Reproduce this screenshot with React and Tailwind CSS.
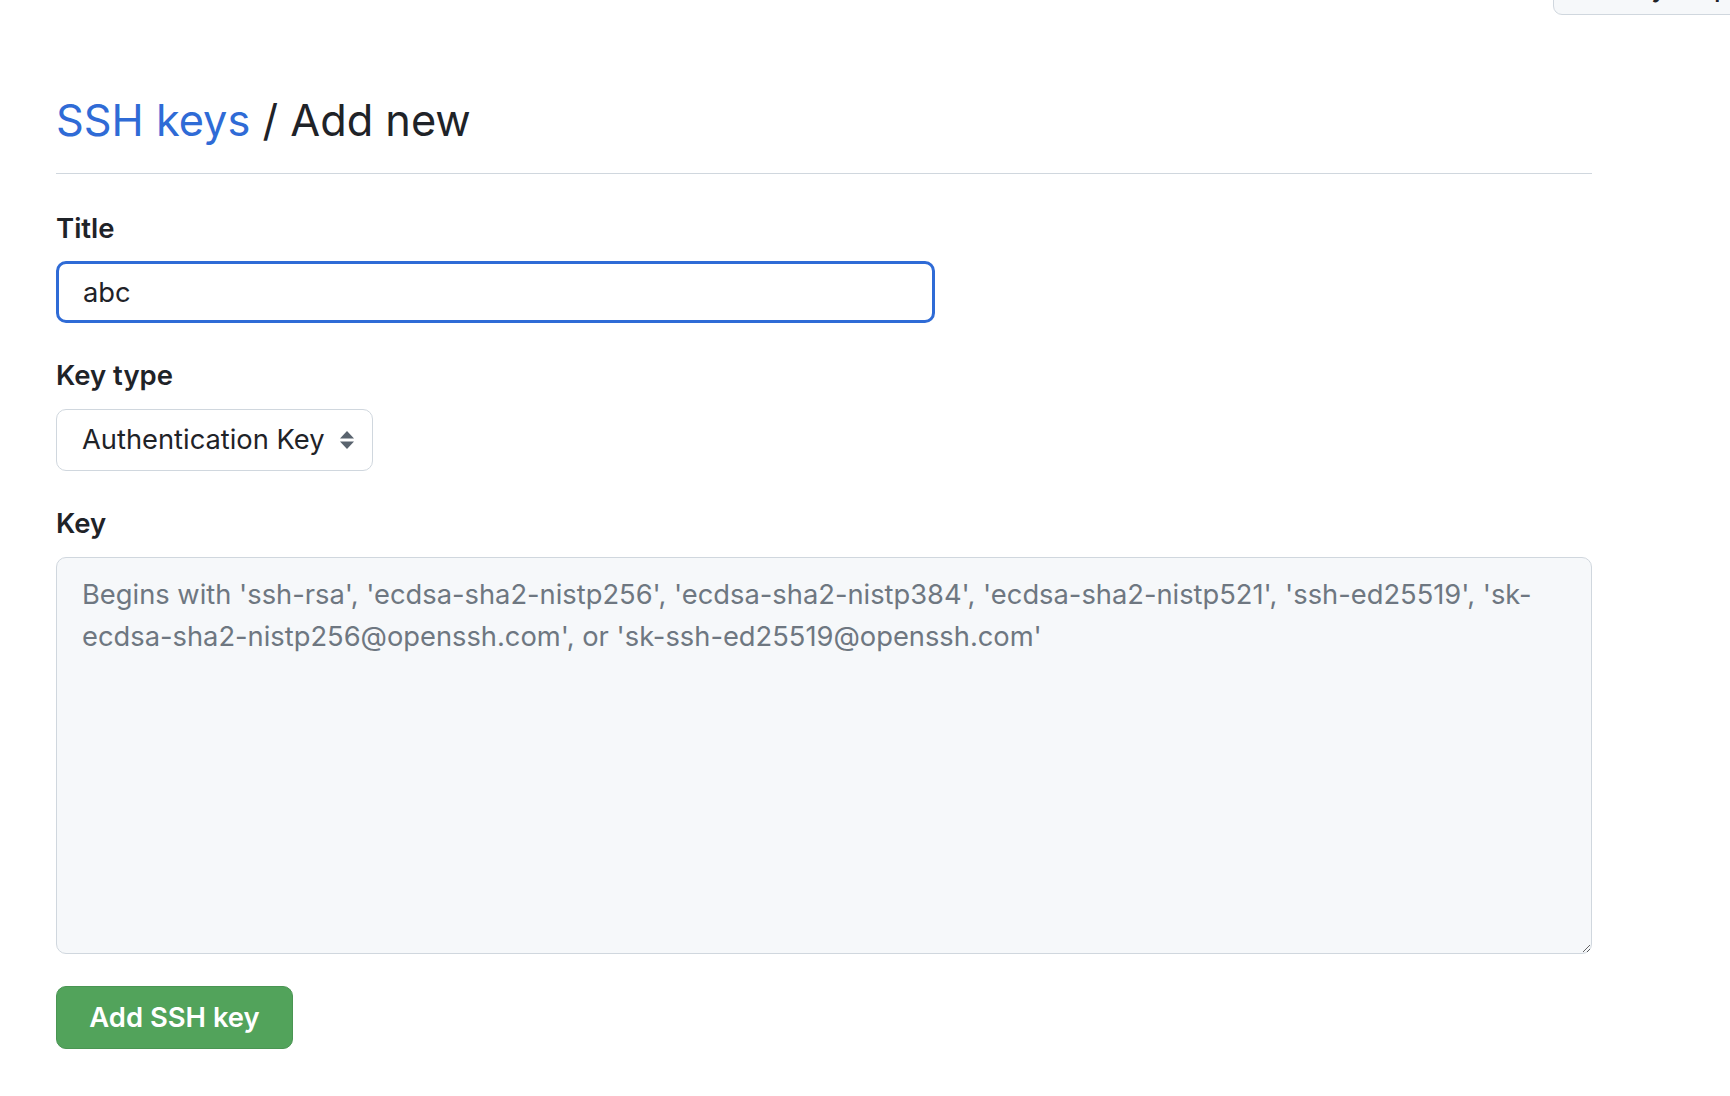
import React from "react";

export default function App() {
  const placeholder =
    "Begins with 'ssh-rsa', 'ecdsa-sha2-nistp256', 'ecdsa-sha2-nistp384', 'ecdsa-sha2-nistp521', 'ssh-ed25519', 'sk-\necdsa-sha2-nistp256@openssh.com', or 'sk-ssh-ed25519@openssh.com'";
  return (
    <div
      className="w-[1730px] h-[1096px] overflow-hidden bg-white text-[#1f2328]"
      style={{ fontFamily: "Inter, 'Liberation Sans', sans-serif" }}
    >
      {/* top-right cropped button */}
      <div className="h-[15px] flex pl-[1553px]">
        <div className="shrink-0 mt-[-41px] h-[56px] flex items-center rounded-[9px] border border-[#d0d7de] bg-[#f6f8fa] px-6 text-[26px] font-medium whitespace-nowrap">
          Go to your profile
        </div>
      </div>

      <div className="pl-[56px] w-[1592px] pt-[78px]">
        <div className="border-b border-[#d0d7de] pb-[26px]">
          <h1 className="text-[43.3px] leading-[54px] font-normal">
            <a className="text-[#2f6bd6]" href="#">SSH keys</a>
            <span> / Add new</span>
          </h1>
        </div>

        <form className="flex flex-col">
          <label className="mt-[36px] text-[27.5px] leading-[36px] font-semibold">Title</label>
          <input
            className="mt-[15px] w-[879px] h-[62px] rounded-[10px] border-[3px] border-[#2f6bd6] bg-white px-[24px] text-[27.3px] text-[#1f2328] outline-none"
            defaultValue="abc"
          />

          <label className="mt-[34px] text-[27.5px] leading-[36px] font-semibold">Key type</label>
          <div className="mt-[16px] w-[317px] h-[62px] rounded-[10px] border border-[#d0d7de] bg-white pl-[25px] pr-[16px] flex items-center justify-between">
            <span className="text-[27.3px]">Authentication Key</span>
            <svg width="16" height="22" viewBox="0 0 16 22" className="mr-[1px]">
              <path d="M8 2 L15 9.5 H1 Z" fill="#59636e" />
              <path d="M8 20 L15 12.5 H1 Z" fill="#59636e" />
            </svg>
          </div>

          <label className="mt-[34px] text-[27.5px] leading-[36px] font-semibold">Key</label>
          <textarea
            className="mt-[16px] w-[1536px] h-[397px] rounded-[10px] border border-[#d0d7de] bg-[#f6f8fa] px-[25px] pt-[16px] text-[27.3px] leading-[42px] text-[#1f2328] placeholder:text-[#6e7781] outline-none"
            placeholder={placeholder}
          />

          <div className="mt-[32px]">
            <button
              type="button"
              className="w-[237px] h-[63px] rounded-[10px] border border-[#4a9553] bg-[#52a35b] text-white text-[27.4px] font-semibold"
            >
              Add SSH key
            </button>
          </div>
        </form>
      </div>
    </div>
  );
}
